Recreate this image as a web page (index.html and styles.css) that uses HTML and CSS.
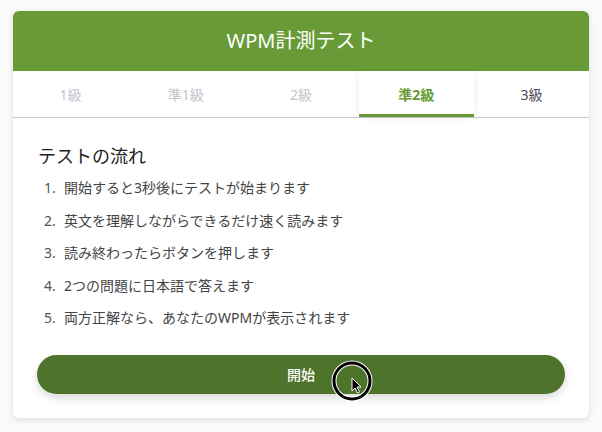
FILE: index.html
```html
<!DOCTYPE html>
<html lang="ja">
<head>
    <meta charset="UTF-8">
    <title>WPM計測テスト</title>
    <link rel="stylesheet" href="styles.css">
</head>
<body>
    <div class="card">
        <div class="card-header">WPM計測テスト</div>

        <div class="tabs">
            <div class="tab disabled">1級</div>
            <div class="tab disabled">準1級</div>
            <div class="tab disabled">2級</div>
            <div class="tab active">準2級</div>
            <div class="tab">3級</div>
        </div>

        <div class="card-body">
            <h2>テストの流れ</h2>
            <ol class="steps">
                <li>開始すると3秒後にテストが始まります</li>
                <li>英文を理解しながらできるだけ速く読みます</li>
                <li>読み終わったらボタンを押します</li>
                <li>2つの問題に日本語で答えます</li>
                <li>両方正解なら、あなたのWPMが表示されます</li>
            </ol>
            <div class="start-wrap">
                <button class="start-btn">開始</button>
                <!-- 録画時のカーソル表示 -->
                <svg class="cursor" width="44" height="44" viewBox="0 0 44 44">
                    <circle cx="22" cy="22" r="18" fill="none" stroke="#fff" stroke-width="5"/>
                    <circle cx="22" cy="22" r="18" fill="none" stroke="#000" stroke-width="3"/>
                    <path d="M22 19 L22 32 L25 29 L27.5 34 L29.5 33 L27 28 L31 28 Z" fill="#000" stroke="#fff" stroke-width="1"/>
                </svg>
            </div>
        </div>
    </div>
</body>
</html>
```

FILE: styles.css
```css
body {
    font-family: "Noto Sans", "Noto Sans CJK JP", sans-serif;
    margin: 0;
    padding: 11px 13px;
    background-color: #fafafa;
    color: #333;
}

.card {
    background-color: #fff;
    border-radius: 6px;
    box-shadow: 0 2px 6px rgba(0, 0, 0, 0.12);
    overflow: hidden;
}

.card-header {
    height: 60px;
    line-height: 60px;
    text-align: center;
    font-size: 20px;
    color: #fff;
    background-color: #689b37;
}

.tabs {
    display: grid;
    grid-template-columns: repeat(5, 1fr);
    border-bottom: 1px solid #c8c8c8;
}

.tab {
    height: 46px;
    line-height: 47px;
    text-align: center;
    font-size: 14px;
    color: #4a4a55;
    box-sizing: border-box;
}

    .tab.disabled {
        color: #c3c3cb;
    }

    .tab.active {
        color: #679a36;
        font-weight: bold;
        border-bottom: 3px solid #689b37;
        box-shadow: 0 0 8px rgba(0, 0, 0, 0.08);
    }

.card-body {
    padding: 24px;
}

h2 {
    margin: 0 0 0 1px;
    font-size: 18px;
    font-weight: normal;
    line-height: 28px;
    color: #222;
}

.steps {
    margin: 2px 0 0;
    padding-left: 7px;
    list-style: none;
    font-size: 14px;
    color: #444;
}

    .steps li {
        line-height: 32.5px;
    }

        .steps li::before {
            content: counter(list-item) ".";
            display: inline-block;
            width: 20px;
            color: #555;
        }

.start-wrap {
    position: relative;
    margin-top: 20px;
}

.start-btn {
    display: block;
    width: 100%;
    height: 39px;
    border: none;
    border-radius: 20px;
    background-color: #4e742b;
    color: #fff;
    font-family: inherit;
    font-size: 14px;
    font-weight: 500;
    box-shadow: 0 4px 8px rgba(0, 0, 0, 0.15);
}

.cursor {
    position: absolute;
    left: 293px;
    top: 4px;
}
```
